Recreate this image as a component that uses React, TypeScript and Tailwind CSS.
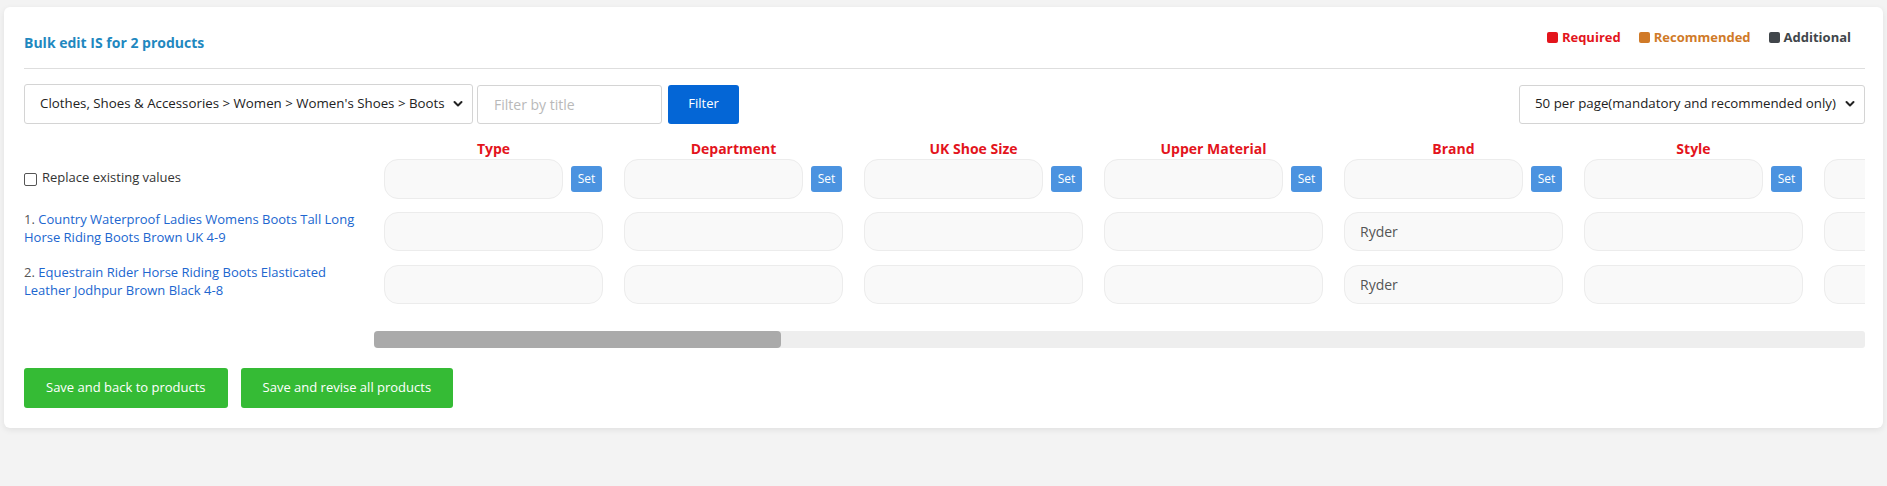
import React from "react";

const columns = [
  "Type",
  "Department",
  "UK Shoe Size",
  "Upper Material",
  "Brand",
  "Style",
  "Colour",
  "Heel Height",
  "Toe Shape",
  "Closure",
  "Heel Style",
  "Occasion",
  "Features",
  "Lining Material",
  "Outsole Material",
  "Shaft Height",
  "Pattern",
  "Theme",
  "Season",
  "Width",
  "Insole Material",
  "Country of Manufacture",
];

const products = [
  { n: 1, title: "Country Waterproof Ladies Womens Boots Tall Long Horse Riding Boots Brown UK 4-9", values: { Brand: "Ryder" } as Record<string, string> },
  { n: 2, title: "Equestrain Rider Horse Riding Boots Elasticated Leather Jodhpur Brown Black 4-8", values: { Brand: "Ryder" } as Record<string, string> },
];

function Chevron() {
  return (
    <svg width="10" height="8" viewBox="0 0 10 8" className="pointer-events-none absolute right-[10px] top-1/2 -translate-y-1/2">
      <polyline points="1.5,2 5,5.5 8.5,2" fill="none" stroke="#222" strokeWidth="2" strokeLinecap="round" strokeLinejoin="round" />
    </svg>
  );
}

function Legend({ color, text, label }: { color: string; text: string; label: string }) {
  return (
    <div className="flex items-center gap-[4px]">
      <span className={`h-[11px] w-[11px] rounded-[2px] ${color}`} />
      <span className={`text-[13px] font-bold leading-[18px] ${text}`}>{label}</span>
    </div>
  );
}

const cellCls = "h-[39px] rounded-[14px] border border-[#ececec] bg-[#f9f9f9] px-[15px] flex items-center text-[14px] text-[#555]";

export default function App() {
  return (
    <div className="min-h-[486px] bg-[#f3f3f3] pt-[7px] font-['Open_Sans',sans-serif]">
      <div className="mx-[4px] rounded-[6px] bg-white pl-[20px] pr-[18px] pt-[26px] pb-[20px] shadow-[0_2px_6px_rgba(0,0,0,0.08)]">
        {/* header */}
        <div className="flex items-start justify-between border-b border-[#dedede] pb-[15px]">
          <h1 className="text-[14px] font-bold leading-[20px] text-[#1f88bf]">Bulk edit IS for 2 products</h1>
          <div className="-mt-[5px] mr-[14px] flex items-center gap-[18px]">
            <Legend color="bg-[#e3141c]" text="text-[#e3141c]" label="Required" />
            <Legend color="bg-[#d07a28]" text="text-[#d07a28]" label="Recommended" />
            <Legend color="bg-[#41464b]" text="text-[#41464b]" label="Additional" />
          </div>
        </div>

        {/* filters */}
        <div className="mt-[15px] flex items-center">
          <div className="relative">
            <select className="h-[40px] w-[449px] appearance-none rounded-[3px] border border-[#d4d4d4] bg-white pl-[15px] text-[13.3px] text-[#222] outline-none">
              <option>Clothes, Shoes &amp; Accessories &gt; Women &gt; Women's Shoes &gt; Boots</option>
            </select>
            <Chevron />
          </div>
          <input
            placeholder="Filter by title"
            className="ml-[4px] h-[39px] w-[185px] rounded-[3px] border border-[#d4d4d4] px-[16px] text-[14px] outline-none placeholder:text-[#b9b9b9]"
          />
          <button className="ml-[6px] h-[39px] w-[71px] rounded-[3px] bg-[#0466d6] text-[13px] text-white">Filter</button>
          <div className="relative ml-auto">
            <select className="h-[39px] w-[346px] appearance-none rounded-[3px] border border-[#d4d4d4] bg-white pl-[15px] text-[13.3px] text-[#222] outline-none">
              <option>50 per page(mandatory and recommended only)</option>
            </select>
            <Chevron />
          </div>
        </div>

        {/* table */}
        <div className="mt-[15px] flex">
          <div className="w-[350px] shrink-0 pr-[10px] text-[13px]">
            <div className="h-[20px]" />
            <label className="flex h-[40px] items-center gap-[5px] text-[#333]">
              <span className="h-[13px] w-[13px] rounded-[2px] border border-[#555] bg-white" />
              <span className="-mt-[2px]">Replace existing values</span>
            </label>
            {products.map((p) => (
              <p key={p.n} className="mt-[11px] h-[42px] leading-[18px] text-[#555]">
                {p.n}.{" "}
                <a href="#" className="text-[#2066cf]">{p.title}</a>
              </p>
            ))}
          </div>

          <div className="min-w-0 flex-1">
            <div className="overflow-hidden pl-[10px]">
              <div className="flex gap-[21px]">
                {columns.map((c) => (
                  <div key={c} className="w-[219px] shrink-0">
                    <div className="h-[20px] text-center text-[14px] font-bold leading-[20px] text-[#e3141c] whitespace-nowrap">{c}</div>
                    <div className="flex h-[40px] items-center gap-[8px]">
                      <div className="h-[40px] w-[179px] rounded-[14px] border border-[#ececec] bg-[#f9f9f9]" />
                      <button className="h-[26px] w-[31px] rounded-[3px] bg-[#4b93e0] text-[12px] text-white">Set</button>
                    </div>
                    {products.map((p) => (
                      <div key={p.n} className={`${cellCls} ${p.n === 1 ? "mt-[13px]" : "mt-[14px]"}`}>
                        {p.values[c] ?? ""}
                      </div>
                    ))}
                  </div>
                ))}
              </div>
            </div>
            {/* horizontal scrollbar */}
            <div className="mt-[27px] h-[17px] rounded-[3px] bg-[#eeeeee]">
              <div className="h-full w-[407px] rounded-[4px] bg-[#aaaaaa]" />
            </div>
          </div>
        </div>

        {/* actions */}
        <div className="mt-[20px] flex gap-[13px]">
          <button className="h-[40px] rounded-[3px] bg-[#35bb35] px-[22px] text-[13px] text-white">Save and back to products</button>
          <button className="h-[40px] rounded-[3px] bg-[#35bb35] px-[22px] text-[13px] text-white">Save and revise all products</button>
        </div>
      </div>
    </div>
  );
}
